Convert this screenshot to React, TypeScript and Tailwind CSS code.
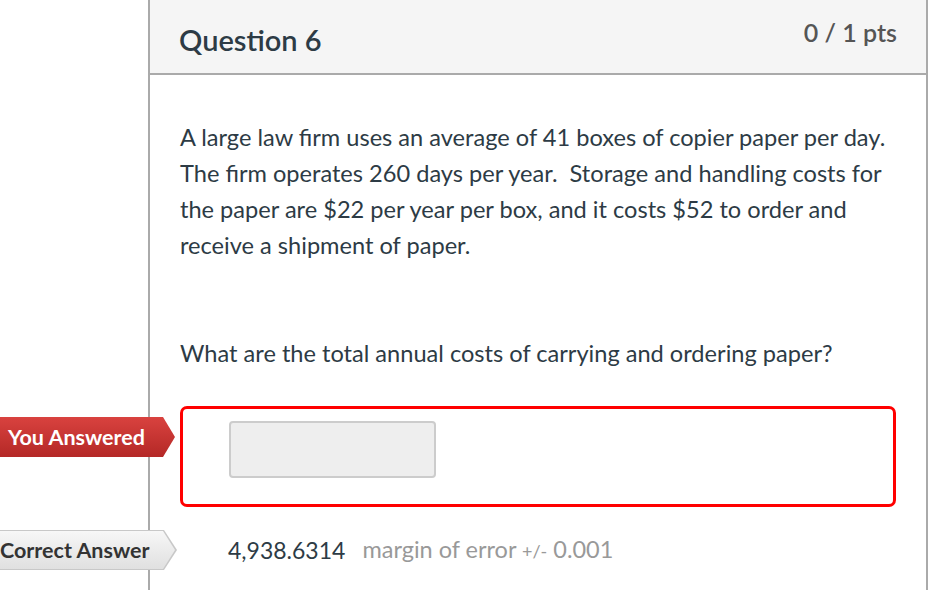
export default function App() {
  return (
    <div className="w-[947px] h-[590px] overflow-hidden bg-white font-['Lato','Liberation_Sans',sans-serif] text-[#2d3b45]">
      <div className="ml-[148px] w-[780px] h-[590px] border-x-2 border-[#aaaaaa]">
        {/* header */}
        <div className="h-[75px] bg-[#f5f5f5] border-b-2 border-[#aaaaaa] flex justify-between items-start px-[29px]">
          <h2 className="mt-[22px] text-[29px] font-semibold leading-[36px]">Question 6</h2>
          <div className="mt-[16px] text-[25px] font-semibold leading-[32px] text-[#555555]">0 / 1 pts</div>
        </div>

        <div className="px-[30px] pt-[44px]">
          <p className="text-[23.6px] leading-[36px]">
            A large law firm uses an average of 41 boxes of copier paper per day. The firm operates 260 days per year.&nbsp; Storage and handling costs for the paper are $22 per year per box, and it costs $52 to order and receive a shipment of paper.
          </p>
          <p className="mt-[72px] text-[23.6px] leading-[36px]">
            What are the total annual costs of carrying and ordering paper?
          </p>

          {/* you answered */}
          <div className="relative mt-[35px]">
            <div className="absolute left-[-180px] top-[11px] h-[40px] w-[175px] [clip-path:polygon(0_0,163px_0,175px_50%,163px_100%,0_100%)] bg-gradient-to-b from-[#d9423f] to-[#b42826] flex items-center pl-[8px] text-white text-[21.5px] font-bold">
              You Answered
            </div>
            <div className="w-[716px] h-[101px] border-[3px] border-[#ff0000] rounded-[7px] pt-[12px] pl-[46px]">
              <div className="w-[207px] h-[57px] bg-[#eeeeee] border-2 border-[#cccccc] rounded-[4px]" />
            </div>
          </div>

          {/* correct answer */}
          <div className="relative mt-[23px] h-[40px] flex items-center pl-[48px]">
            <div className="absolute left-[-180px] top-0 h-[40px] w-[177px] bg-[#c8c8c8] [clip-path:polygon(0_0,164px_0,177px_50%,164px_100%,0_100%)]">
              <div className="absolute left-0 top-px h-[38px] w-[175px] bg-gradient-to-b from-[#f7f7f7] to-[#e0e0e0] [clip-path:polygon(0_0,163px_0,175px_50%,163px_100%,0_100%)] flex items-center text-[21.5px] font-bold text-[#333333]">
                Correct Answer
              </div>
            </div>
            <span className="text-[23px]">4,938.6314</span>
            <span className="ml-[17px] text-[23.5px] text-[#999999]">
              margin of error <span className="text-[18px]">+/-</span> 0.001
            </span>
          </div>
        </div>
      </div>
    </div>
  )
}
